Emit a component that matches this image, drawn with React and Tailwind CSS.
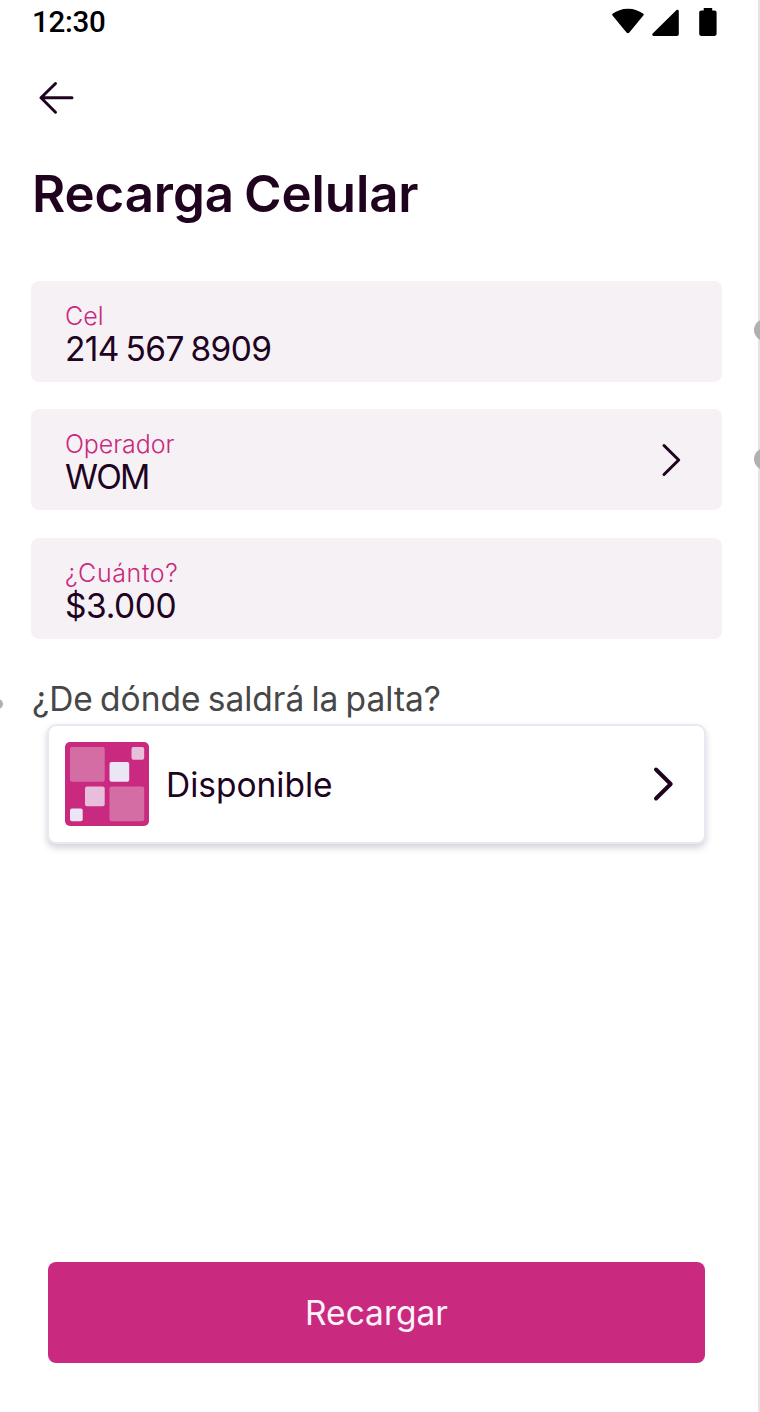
import React from "react";

function StatusBar() {
  return (
    <div className="flex h-[46px] items-start justify-between pl-8 pr-[40.500px]">
      <span className="pt-[7px] font-[Roboto] text-[29.5px] font-medium leading-[30px] tracking-[-0.25px] text-black">12:30</span>
      <svg width="106" height="46" viewBox="611 0 106 46" fill="#000" className="block">
        <path d="M628 8.800c6.200 0 11.200 2.100 15 4.800.8.6.9 1.300.3 2L629.300 32.500c-.8 1-2 1-2.800 0L612.500 15.600c-.6-.7-.4-1.400.4-2C616.700 10.900 621.800 8.800 628 8.800z" />
        <path d="M676.300 10.300c1-1 2.500-.4 2.500 1V34c0 1.200-.8 2-2 2h-22.900c-1.500 0-2.200-1.500-1.200-2.500z" />
        <path d="M703.700 8h8.500v2.500h2.300c1.300 0 2.100.9 2.100 2.100v21.200c0 1.300-.9 2.200-2.200 2.200h-13c-1.300 0-2.200-.9-2.200-2.200V12.600c0-1.200.9-2.100 2.100-2.100h2.400z" />
      </svg>
    </div>
  );
}

function Chevron({ weight }) {
  return (
    <svg width="22" height="36" viewBox="0 0 22 36" fill="none" stroke="#20041f" strokeWidth={weight} strokeLinecap="round" strokeLinejoin="round" className="block shrink-0">
      <path d="M3 3.500 17.700 18 3 32.500" />
    </svg>
  );
}

function Field({ label, labelClass, value, valueClass, children }) {
  return (
    <div className="flex h-[100.7px] items-center justify-between rounded-lg bg-[#f6f1f5] pl-[34px] pr-[39px]">
      <div className="flex flex-col pt-[3px]">
        <span className={`text-[25px] font-light leading-[33px] text-[#c9297e] ${labelClass}`}>{label}</span>
        <span className={`text-[33.5px] leading-[33px] text-[#20041f] ${valueClass}`}>{value}</span>
      </div>
      {children}
    </div>
  );
}

function PocketIcon() {
  return (
    <svg width="84" height="84" viewBox="0 0 84 84" className="block shrink-0">
      <rect width="84" height="84" rx="5" fill="#c9297e" />
      <g fill="#d56da5">
        <rect x="5" y="5" width="34.700" height="34.700" rx="2" />
        <rect x="44.500" y="44.500" width="34.700" height="34.700" rx="2" />
      </g>
      <g fill="#e8bfdb">
        <rect x="66.500" y="5" width="12.700" height="12.700" rx="2" />
        <rect x="20" y="44.500" width="19.700" height="19.700" rx="2" />
      </g>
      <g fill="#eae6f5">
        <rect x="44.500" y="20" width="19.700" height="19.700" rx="2" />
        <rect x="5" y="66.500" width="12.700" height="12.700" rx="2" />
      </g>
    </svg>
  );
}

export default function App() {
  return (
    <div className="relative flex h-[1412px] w-[760px] overflow-hidden bg-[#e3e3e3] font-['Inter',sans-serif]">
      <main className="flex w-[757.500px] flex-col bg-white">
        <StatusBar />
        <button aria-label="Volver" className="ml-[38px] mt-[34px] w-[37px]">
          <svg width="37" height="36" viewBox="0 0 37 36" fill="none" stroke="#20041f" strokeWidth="3" strokeLinecap="round" strokeLinejoin="round" className="block">
            <path d="M17.500 3.500 3 17.800l14.500 14.400M3 17.800h31" />
          </svg>
        </button>

        <h1 className="ml-[32px] mt-[48px] whitespace-nowrap text-[51px] font-semibold leading-[60px] tracking-[-0.1px] [word-spacing:-2.6px] text-[#20041f]">Recarga Celular</h1>

        <div className="ml-[31px] mt-[57px] flex w-[691px] flex-col gap-[27.8px]">
          <Field label="Cel" labelClass="" value="214 567 8909" valueClass="tracking-[-0.6px] [word-spacing:-2.2px]" />
          <Field label="Operador" labelClass="tracking-[-0.1px]" value="WOM" valueClass="tracking-[-1.8px]">
            <Chevron weight="3" />
          </Field>
          <Field label="¿Cuánto?" labelClass="tracking-[0.6px]" value="$3.000" valueClass="tracking-[-0.4px]" />
        </div>

        <p className="ml-[32px] mt-[40px] whitespace-nowrap text-[33.5px] leading-[40px] [word-spacing:-2.2px] text-[#474747]">¿De dónde saldrá la palta?</p>

        <div className="ml-[47px] mt-[5px] flex h-[120px] w-[659px] shrink-0 items-center rounded-[9px] border-2 border-[#e9e6f6] bg-white pl-4 pr-[29.500px] shadow-[0_4px_7px_rgba(32,4,31,0.18)]">
          <PocketIcon />
          <span className="ml-[17px] flex-1 pt-[2px] text-[33.5px] leading-[40px] text-[#20041f]">Disponible</span>
          <Chevron weight="4" />
        </div>

        <button className="mb-[49px] ml-12 mt-auto flex h-[101px] w-[657px] shrink-0 items-center justify-center rounded-lg bg-[#c9297e] text-[33.5px] leading-[40px] text-[#fbf3f8]">
          Recargar
        </button>
      </main>

      <span className="absolute left-[754px] top-[319px] size-[22px] rounded-full bg-[#b0b0b0]" />
      <span className="absolute left-[754px] top-[448px] size-[22px] rounded-full bg-[#b0b0b0]" />
      <span className="absolute left-[-7px] top-[699px] size-[10px] rounded-full bg-[#b0b0b0]" />
    </div>
  );
}
